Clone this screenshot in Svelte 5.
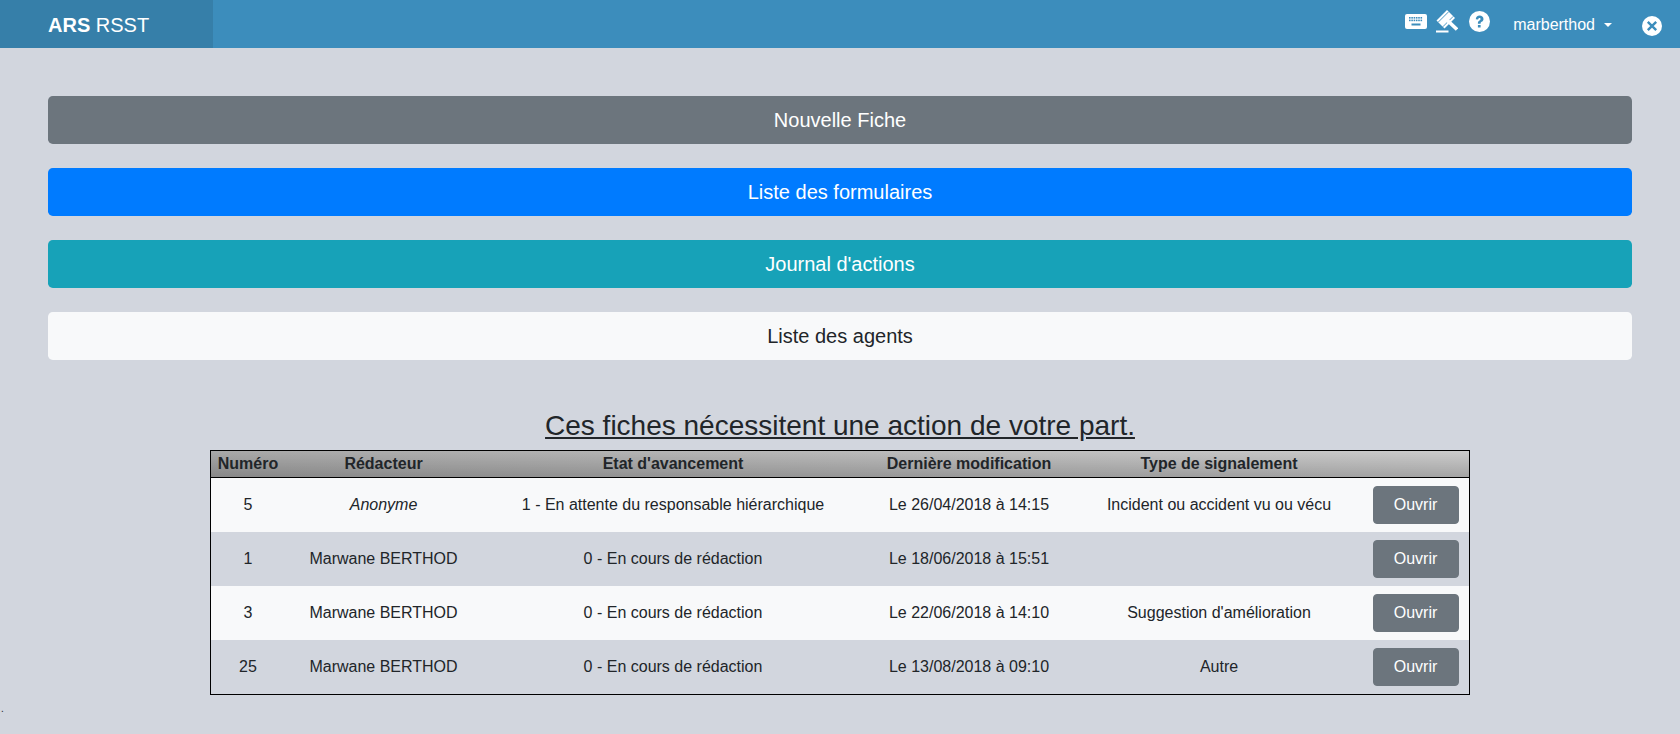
<script>
    const fiches = [
        { num: 5, redacteur: 'Anonyme', anonyme: true, etat: '1 - En attente du responsable hiérarchique', modif: 'Le 26/04/2018 à 14:15', type: 'Incident ou accident vu ou vécu' },
        { num: 1, redacteur: 'Marwane BERTHOD', etat: '0 - En cours de rédaction', modif: 'Le 18/06/2018 à 15:51', type: '' },
        { num: 3, redacteur: 'Marwane BERTHOD', etat: '0 - En cours de rédaction', modif: 'Le 22/06/2018 à 14:10', type: "Suggestion d'amélioration" },
        { num: 25, redacteur: 'Marwane BERTHOD', etat: '0 - En cours de rédaction', modif: 'Le 13/08/2018 à 09:10', type: 'Autre' }
    ];
    const keyCols = [4, 6.3, 8.6, 10.9, 13.2, 15.5];
</script>

<header class="navbar">
    <div class="brand"><b>ARS</b> RSST</div>
    <div class="nav-right">
        <svg class="ico-keyboard" viewBox="0 0 22 15" aria-hidden="true">
            <rect width="22" height="15" rx="2" fill="#fff" />
            <g fill="#3c8dbc">
                {#each keyCols as x}
                    <rect {x} y="3" width="1.6" height="1.6" />
                    <rect {x} y="5.6" width="1.6" height="1.6" />
                {/each}
                <rect x="6.500" y="9.500" width="9" height="2" />
            </g>
        </svg>
        <svg class="ico-gavel" viewBox="0 0 22 23" aria-hidden="true">
            <path d="M0.500 10.500 11 0l8 8-10.500 10.500z" fill="#fff" />
            <path d="M2.200 12.200 12.700 1.700M6.800 16.800 17.300 6.300" stroke="#3c8dbc" stroke-width="0.900" fill="none" />
            <path d="M11.500 10.500l9.500 9" stroke="#fff" stroke-width="3.600" fill="none" />
            <rect x="0" y="20.500" width="12.500" height="2" fill="#fff" />
        </svg>
        <svg class="ico-help" viewBox="0 0 21 21" aria-hidden="true">
            <circle cx="10.5" cy="10.5" r="10.5" fill="#fff" />
            <path d="M6.800 8.200c0-2.300 1.700-3.700 3.800-3.700 2.100 0 3.900 1.400 3.900 3.400 0 1.500-.9 2.300-1.800 2.900-.8.500-1.100.8-1.100 1.500v.4H8.900v-.7c0-1.300.6-2 1.600-2.600.7-.5 1.100-.8 1.100-1.400 0-.7-.5-1.100-1.100-1.100-.8 0-1.300.6-1.400 1.500z" fill="#3c8dbc" />
            <rect x="8.900" y="14" width="2.700" height="2.500" fill="#3c8dbc" />
        </svg>
        <span class="user">marberthod<span class="caret"></span></span>
        <svg class="ico-close" viewBox="0 0 20 20" aria-hidden="true">
            <circle cx="10" cy="10" r="10" fill="#fff" />
            <path d="M5.800 5.800l8.400 8.400M14.200 5.800l-8.400 8.400" stroke="#3c8dbc" stroke-width="2.400" fill="none" />
        </svg>
    </div>
</header>

<main class="content">
    <div class="actions">
        <button class="btn-lg secondary">Nouvelle Fiche</button>
        <button class="btn-lg primary">Liste des formulaires</button>
        <button class="btn-lg info">Journal d'actions</button>
        <button class="btn-lg light">Liste des agents</button>
    </div>

    <h2 class="title">Ces fiches nécessitent une action de votre part.</h2>

    <table class="fiches">
        <thead>
            <tr>
                <th class="c-num">Numéro</th>
                <th class="c-red">Rédacteur</th>
                <th class="c-etat">Etat d'avancement</th>
                <th class="c-modif">Dernière modification</th>
                <th class="c-type">Type de signalement</th>
                <th class="c-open"></th>
            </tr>
        </thead>
        <tbody>
            {#each fiches as f}
                <tr>
                    <td>{f.num}</td>
                    <td>{#if f.anonyme}<i>{f.redacteur}</i>{:else}{f.redacteur}{/if}</td>
                    <td>{f.etat}</td>
                    <td>{f.modif}</td>
                    <td>{f.type}</td>
                    <td class="cell-open"><button class="open">Ouvrir</button></td>
                </tr>
            {/each}
        </tbody>
    </table>
    <p class="dot">.</p>
</main>

<style>
    :global(body) {
        background-color: #d2d6de;
        font-family: "Liberation Sans", Arial, sans-serif;
        color: #212529;
    }

    .navbar {
        display: flex;
        justify-content: space-between;
        height: 48px;
        background-color: #3c8dbc;
        color: #fff;
    }

    .brand {
        width: 165px;
        padding-left: 48px;
        background-color: #367fa9;
        font-size: 20px;
        line-height: 50px;
    }

    .nav-right {
        display: flex;
        align-items: flex-start;
        padding-right: 18px;
    }

    .ico-keyboard {
        width: 22px;
        height: 15px;
        margin-top: 14px;
    }

    .ico-gavel {
        width: 22px;
        height: 23px;
        margin: 10px 0 0 9px;
    }

    .ico-help {
        width: 21px;
        height: 21px;
        margin: 11px 0 0 11px;
    }

    .user {
        margin-left: 23px;
        font-size: 16px;
        line-height: 50px;
    }

    .caret {
        display: inline-block;
        margin-left: 9px;
        vertical-align: 3px;
        border-top: 4px solid #fff;
        border-left: 4px solid transparent;
        border-right: 4px solid transparent;
    }

    .ico-close {
        width: 20px;
        height: 20px;
        margin: 16px 0 0 30px;
    }

    .content {
        padding: 48px 48px 0;
    }

    .actions {
        display: flex;
        flex-direction: column;
        gap: 24px;
    }

    .btn-lg {
        height: 48px;
        border: 1px solid transparent;
        border-radius: 4.8px;
        font-family: inherit;
        font-size: 20px;
        color: #fff;
    }

    .secondary { background-color: #6c757d; }
    .primary { background-color: #007bff; }
    .info { background-color: #17a2b8; }
    .light { background-color: #f8f9fa; color: #212529; }

    .title {
        margin: 49px 0 0;
        font-size: 28px;
        font-weight: 400;
        line-height: 34px;
        text-align: center;
        text-decoration: underline;
    }

    .fiches {
        width: 1260px;
        margin: 7px auto 0;
        border: 1px solid #000;
        border-collapse: collapse;
        table-layout: fixed;
        font-size: 16px;
        text-align: center;
    }

    .fiches thead tr {
        background: linear-gradient(rgba(0, 0, 0, 0), rgba(0, 0, 0, 0.2)), linear-gradient(to right, #a8a8a8, #cccccc);
    }

    .fiches th {
        height: 26px;
        padding: 0;
        border-bottom: 1px solid #000;
    }

    .c-num { width: 74px; }
    .c-red { width: 197px; }
    .c-etat { width: 382px; }
    .c-modif { width: 210px; }
    .c-type { width: 290px; }

    .fiches td {
        height: 54px;
        padding: 0;
    }

    .fiches .cell-open {
        padding-right: 2px;
    }

    .fiches tbody tr:nth-child(odd) {
        background-color: #f8f9fa;
    }

    .open {
        width: 86px;
        height: 38px;
        border: 1px solid #6c757d;
        border-radius: 4px;
        background-color: #6c757d;
        color: #fff;
        font-family: inherit;
        font-size: 16px;
    }

    .dot {
        margin: 8px 0 0 -47px;
        font-size: 10px;
    }
</style>
